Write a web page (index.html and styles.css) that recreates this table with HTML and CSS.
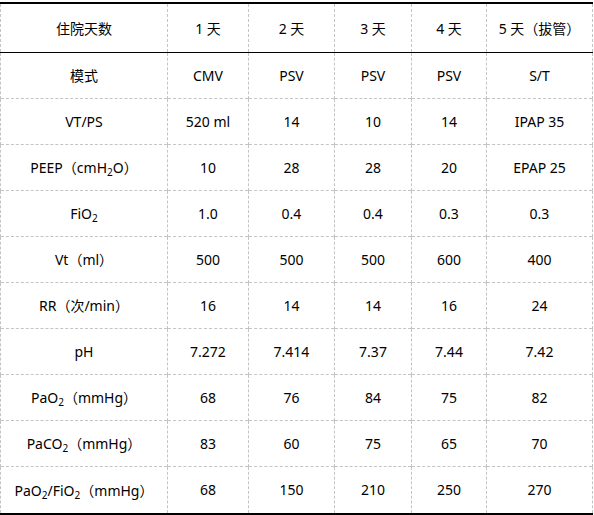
FILE: index.html
```html
<!DOCTYPE html>
<html lang="zh">

<head>
    <meta charset="UTF-8">
    <meta name="viewport" content="width=device-width, initial-scale=1.0">
    <title>呼吸机参数</title>
    <link rel="stylesheet" href="styles.css">
</head>

<body>
    <table class="vent">
        <colgroup>
            <col class="c-name">
            <col class="c-d1">
            <col class="c-d2">
            <col class="c-d3">
            <col class="c-d4">
            <col class="c-d5">
        </colgroup>
        <thead>
            <tr>
                <th>住院天数</th>
                <th>1 天</th>
                <th>2 天</th>
                <th>3 天</th>
                <th>4 天</th>
                <th>5 天（拔管）</th>
            </tr>
        </thead>
        <tbody>
            <tr>
                <td>模式</td>
                <td>CMV</td>
                <td>PSV</td>
                <td>PSV</td>
                <td>PSV</td>
                <td>S/T</td>
            </tr>
            <tr>
                <td>VT/PS</td>
                <td>520 ml</td>
                <td>14</td>
                <td>10</td>
                <td>14</td>
                <td>IPAP 35</td>
            </tr>
            <tr>
                <td>PEEP（cmH<span class="sub">2</span>O）</td>
                <td>10</td>
                <td>28</td>
                <td>28</td>
                <td>20</td>
                <td>EPAP 25</td>
            </tr>
            <tr>
                <td>FiO<span class="sub">2</span></td>
                <td>1.0</td>
                <td>0.4</td>
                <td>0.4</td>
                <td>0.3</td>
                <td>0.3</td>
            </tr>
            <tr>
                <td>Vt（ml）</td>
                <td>500</td>
                <td>500</td>
                <td>500</td>
                <td>600</td>
                <td>400</td>
            </tr>
            <tr>
                <td>RR（次/min）</td>
                <td>16</td>
                <td>14</td>
                <td>14</td>
                <td>16</td>
                <td>24</td>
            </tr>
            <tr>
                <td>pH</td>
                <td>7.272</td>
                <td>7.414</td>
                <td>7.37</td>
                <td>7.44</td>
                <td>7.42</td>
            </tr>
            <tr>
                <td>PaO<span class="sub">2</span>（mmHg）</td>
                <td>68</td>
                <td>76</td>
                <td>84</td>
                <td>75</td>
                <td>82</td>
            </tr>
            <tr>
                <td>PaCO<span class="sub">2</span>（mmHg）</td>
                <td>83</td>
                <td>60</td>
                <td>75</td>
                <td>65</td>
                <td>70</td>
            </tr>
            <tr class="last">
                <td>PaO<span class="sub">2</span>/FiO<span class="sub">2</span>（mmHg）</td>
                <td>68</td>
                <td>150</td>
                <td>210</td>
                <td>250</td>
                <td>270</td>
            </tr>
        </tbody>
    </table>
</body>

</html>
```

FILE: styles.css
```css
body {
    margin: 0;
    background: #fff;
    font-family: "Noto Sans", "Noto Sans CJK SC", sans-serif;
    font-size: 14px;
    color: #000;
}

.vent {
    margin-top: 2px;
    width: 592px;
    table-layout: fixed;
    border-collapse: collapse;
    border-top: 2px solid #000;
    border-bottom: 2px solid #000;
}

.c-name {
    width: 167px;
}

.c-d1 {
    width: 81px;
}

.c-d2 {
    width: 86px;
}

.c-d3 {
    width: 77px;
}

.c-d4 {
    width: 75px;
}

.c-d5 {
    width: 106px;
}

.vent th,
.vent td {
    padding: 0;
    text-align: center;
    font-weight: normal;
    border-left: 1px dashed #c4c4c4;
    border-right: 1px dashed #c4c4c4;
    border-top: 1px dashed #c4c4c4;
    white-space: nowrap;
}

.vent thead tr {
    height: 49px;
}

.vent tbody tr {
    height: 46px;
}

.vent tbody tr.last {
    height: 48px;
}

.vent thead th {
    border-bottom: 1px solid #000;
}

.sub {
    font-size: 10px;
    vertical-align: -3px;
    line-height: 0;
}
```
